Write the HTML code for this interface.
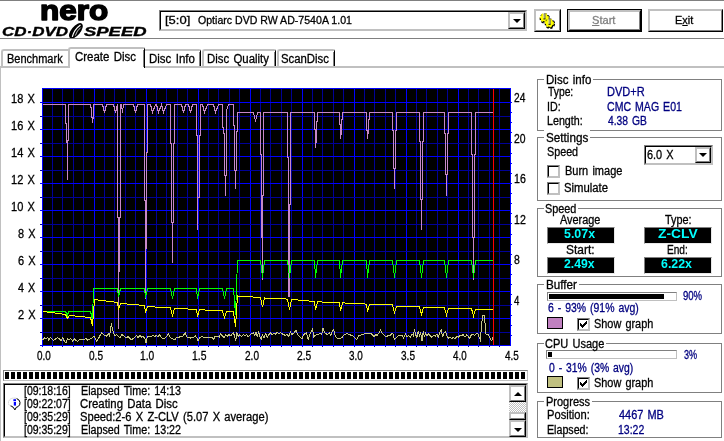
<!DOCTYPE html>
<html lang="en">
<head>
<meta charset="utf-8">
<title>Nero CD-DVD Speed</title>
<style>
html,body{margin:0;padding:0;background:#fff}
body{width:724px;height:441px;overflow:hidden;position:relative;font-family:"Liberation Sans",sans-serif;font-size:12px;color:#000}
#app{will-change:transform;position:absolute;left:0;top:0;width:724px;height:441px;overflow:hidden;background:#fff}
#app *{box-sizing:border-box}
.a,.t,.hl,.vl,.grp,.sunk,.btn,.chk,.bar,.sw,.lcd,svg{position:absolute}
.t{-webkit-text-stroke:0.3px currentColor;white-space:pre;transform-origin:0 0;line-height:14px;height:14px;font-size:12px}
.t.s11{font-size:11px;line-height:12px;height:12px}
.t.b{font-weight:bold;-webkit-text-stroke:0}
.t u{text-decoration:underline;text-underline-offset:1px}
.hl{height:1px}
.vl{width:1px}
.grp{border:1px solid #808080}
.sunk{border:1px solid;border-color:#808080 #c0c0c0 #c0c0c0 #808080;background:#fff}
.sunk>i{position:absolute;left:0;top:0;right:0;bottom:0;border:1px solid;border-color:#000 #c0c0c0 #c0c0c0 #000;display:block}
.btn{border:1px solid;border-color:#c0c0c0 #000 #000 #c0c0c0;background:#fff}
.btn>i{position:absolute;left:0;top:0;right:0;bottom:0;border:1px solid;border-color:#c0c0c0 #808080 #808080 #c0c0c0;display:block}
.arrow{position:absolute;width:0;height:0;border-left:4px solid transparent;border-right:4px solid transparent;border-top:4px solid #000}
.arrow.up{border-top:0;border-bottom:4px solid #000}
.bar{border:1px solid;border-color:#808080 #c0c0c0 #c0c0c0 #808080;background:#fff}
.bar>b{position:absolute;left:1px;top:1px;bottom:1px;background:#000;display:block}
.sw{border:1px solid #000}
.lcd{background:#000;border:1px solid;border-color:#808080 #e8e8e8 #e8e8e8 #808080}
.tab{position:absolute;background:#fff}
.cap{position:absolute;background:#fff;height:3px}
</style>
</head>
<body>
<div id="app">
<!-- top frame lines -->
<div class="hl" style="left:0;top:0;width:724px;background:#808080"></div>
<div class="hl" style="left:0;top:38px;width:724px;background:#808080"></div>

<!-- logo -->
<svg class="logo" style="left:0;top:0" width="156" height="38" viewBox="0 0 156 38">
<text x="40" y="19.7" font-family="'Liberation Sans',sans-serif" font-weight="bold" font-size="27.2" textLength="68.2" lengthAdjust="spacingAndGlyphs" fill="#000" stroke="#000" stroke-width="1.5" stroke-linejoin="round">nero</text>
<g font-family="'Liberation Sans',sans-serif" font-weight="bold" font-style="italic" font-size="12" fill="#000" stroke="#000" stroke-width="0.35">
<text x="2" y="35.6" textLength="66" lengthAdjust="spacingAndGlyphs">CD·DVD</text>
<text x="84" y="35.6" textLength="62.5" lengthAdjust="spacingAndGlyphs">SPEED</text>
</g>
<g transform="translate(75.9 30.8) rotate(-50)"><ellipse cx="0" cy="0" rx="9.3" ry="4.5" fill="#000"/><path d="M-7 1.2 Q0 -2.2 7.4 -0.2" stroke="#fff" stroke-width="1.2" fill="none"/><path d="M-4 2.6 Q1 0.6 5.5 1.6" stroke="#fff" stroke-width="0.7" fill="none"/></g>
</svg>

<!-- drive combobox -->
<div class="sunk" style="left:159px;top:10px;width:368px;height:21px"><i></i></div>
<div class="btn" style="left:508px;top:12px;width:17px;height:17px"><i></i><span class="arrow" style="left:4px;top:6px"></span></div>

<!-- options button -->
<div class="btn" style="left:534px;top:9px;width:27px;height:23px"><i></i>
<svg style="left:3px;top:1px" width="21" height="20" viewBox="0 0 21 20"><circle cx="6.8" cy="7.4" r="3.6" fill="#000" stroke="#000" stroke-width="3.2" stroke-dasharray="1.9 1.35"/><circle cx="6.8" cy="7.4" r="4.1" fill="#000"/><circle cx="6.3" cy="6.7" r="3.4" fill="#ffff00" stroke="#ffff00" stroke-width="2.2" stroke-dasharray="1.7 1.55"/><circle cx="6.3" cy="6.7" r="3.5" fill="#ffff00"/><rect x="5.3999999999999995" y="2.3" width="1.1" height="5.4" fill="#c0c0c8"/><rect x="6.5" y="2.3" width="1" height="5.4" fill="#606068"/><rect x="5.3999999999999995" y="7.5" width="2.1" height="0.9" fill="#000"/><circle cx="11.9" cy="12.799999999999999" r="3.6" fill="#000" stroke="#000" stroke-width="3.2" stroke-dasharray="1.9 1.35"/><circle cx="11.9" cy="12.799999999999999" r="4.1" fill="#000"/><circle cx="11.4" cy="12.1" r="3.4" fill="#ffff00" stroke="#ffff00" stroke-width="2.2" stroke-dasharray="1.7 1.55"/><circle cx="11.4" cy="12.1" r="3.5" fill="#ffff00"/><rect x="10.5" y="7.699999999999999" width="1.1" height="5.4" fill="#c0c0c8"/><rect x="11.6" y="7.699999999999999" width="1" height="5.4" fill="#606068"/><rect x="10.5" y="12.9" width="2.1" height="0.9" fill="#000"/></svg></div>

<!-- Start / Exit buttons -->
<div class="a" style="left:567px;top:9px;width:75px;height:23px;border:1px solid #000"></div>
<div class="btn" style="left:568px;top:10px;width:73px;height:21px"><i></i></div>
<div class="btn" style="left:648px;top:9px;width:75px;height:23px"><i></i></div>

<!-- tab control -->
<div class="a" style="left:0;top:66px;width:724px;height:2px;background:#c0c0c0"></div>
<div class="vl" style="left:0;top:66px;height:375px;background:#c0c0c0"></div>
<!-- unselected tabs -->
<div class="tab" style="left:1px;top:49px;width:68px;height:17px;border-top:2px solid #c0c0c0;border-left:2px solid #c0c0c0;border-radius:3px 0 0 0"></div>
<div class="tab" style="left:145px;top:49px;width:56px;height:17px;border-top:2px solid #c0c0c0;border-right:1px solid #000;border-radius:0 2px 0 0"><div class="vl" style="right:0;top:1px;bottom:0;background:#808080"></div></div>
<div class="tab" style="left:202px;top:49px;width:74px;height:17px;border-top:2px solid #c0c0c0;border-left:2px solid #c0c0c0;border-right:1px solid #000;border-radius:3px 2px 0 0"><div class="vl" style="right:0;top:1px;bottom:0;background:#808080"></div></div>
<div class="tab" style="left:277px;top:49px;width:58px;height:17px;border-top:2px solid #c0c0c0;border-left:2px solid #c0c0c0;border-right:1px solid #000;border-radius:3px 2px 0 0"><div class="vl" style="right:0;top:1px;bottom:0;background:#808080"></div></div>
<!-- selected tab -->
<div class="tab" style="left:68px;top:47px;width:77px;height:21px;border-top:2px solid #c0c0c0;border-left:2px solid #c0c0c0;border-right:1px solid #000;border-radius:3px 2px 0 0"><div class="vl" style="right:0;top:1px;bottom:1px;background:#808080"></div></div>

<svg class="chart" style="left:0;top:70px" width="532" height="294" viewBox="0 70 532 294"><rect x="42" y="88" width="469" height="258" fill="#000"/><g shape-rendering="crispEdges" fill="none"><path d="M52.5 89V347" stroke="#000098"/><path d="M62.5 89V347" stroke="#000098"/><path d="M73.5 89V347" stroke="#000098"/><path d="M83.5 89V347" stroke="#000098"/><path d="M94.5 89V347" stroke="#0000ff"/><path d="M104.5 89V347" stroke="#000098"/><path d="M114.5 89V347" stroke="#000098"/><path d="M125.5 89V347" stroke="#000098"/><path d="M135.5 89V347" stroke="#000098"/><path d="M146.5 89V347" stroke="#0000ff"/><path d="M156.5 89V347" stroke="#000098"/><path d="M166.5 89V347" stroke="#000098"/><path d="M177.5 89V347" stroke="#000098"/><path d="M187.5 89V347" stroke="#000098"/><path d="M198.5 89V347" stroke="#0000ff"/><path d="M208.5 89V347" stroke="#000098"/><path d="M218.5 89V347" stroke="#000098"/><path d="M229.5 89V347" stroke="#000098"/><path d="M239.5 89V347" stroke="#000098"/><path d="M250.5 89V347" stroke="#0000ff"/><path d="M260.5 89V347" stroke="#000098"/><path d="M270.5 89V347" stroke="#000098"/><path d="M281.5 89V347" stroke="#000098"/><path d="M291.5 89V347" stroke="#000098"/><path d="M302.5 89V347" stroke="#0000ff"/><path d="M312.5 89V347" stroke="#000098"/><path d="M322.5 89V347" stroke="#000098"/><path d="M333.5 89V347" stroke="#000098"/><path d="M343.5 89V347" stroke="#000098"/><path d="M354.5 89V347" stroke="#0000ff"/><path d="M364.5 89V347" stroke="#000098"/><path d="M374.5 89V347" stroke="#000098"/><path d="M385.5 89V347" stroke="#000098"/><path d="M395.5 89V347" stroke="#000098"/><path d="M406.5 89V347" stroke="#0000ff"/><path d="M416.5 89V347" stroke="#000098"/><path d="M426.5 89V347" stroke="#000098"/><path d="M437.5 89V347" stroke="#000098"/><path d="M447.5 89V347" stroke="#000098"/><path d="M458.5 89V347" stroke="#0000ff"/><path d="M468.5 89V347" stroke="#000098"/><path d="M478.5 89V347" stroke="#000098"/><path d="M489.5 89V347" stroke="#000098"/><path d="M499.5 89V347" stroke="#000098"/><path d="M40 332.5H510" stroke="#000098"/><path d="M40 318.5H510" stroke="#0000ff"/><path d="M40 305.5H510" stroke="#000098"/><path d="M40 291.5H510" stroke="#0000ff"/><path d="M40 278.5H510" stroke="#000098"/><path d="M40 264.5H510" stroke="#0000ff"/><path d="M40 251.5H510" stroke="#000098"/><path d="M40 237.5H510" stroke="#0000ff"/><path d="M40 224.5H510" stroke="#000098"/><path d="M40 210.5H510" stroke="#0000ff"/><path d="M40 197.5H510" stroke="#000098"/><path d="M40 183.5H510" stroke="#0000ff"/><path d="M40 170.5H510" stroke="#000098"/><path d="M40 156.5H510" stroke="#0000ff"/><path d="M40 143.5H510" stroke="#000098"/><path d="M40 129.5H510" stroke="#0000ff"/><path d="M40 116.5H510" stroke="#000098"/><path d="M40 102.5H510" stroke="#0000ff"/><path d="M42.5 88V347M510.5 88V346M42 88.5H511M40 345.5H511" stroke="#0000ff"/><path d="M511 335.5h1M511 325.5h1M511 315.5h1M511 304.5h1M511 294.5h1M511 284.5h1M511 274.5h1M511 264.5h1M511 254.5h1M511 244.5h1M511 234.5h1M511 223.5h1M511 213.5h1M511 203.5h1M511 193.5h1M511 183.5h1M511 173.5h1M511 163.5h1M511 153.5h1M511 142.5h1M511 132.5h1M511 122.5h1M511 112.5h1M511 102.5h1" stroke="#0000ff"/></g><g shape-rendering="crispEdges"><polyline points="43.5,104.5 65.5,104.5 65.5,123.5 66.5,123.5 66.5,142.5 67.5,142.5 67.5,179.5 67.5,140.5 68.5,140.5 68.5,104.5 90.5,104.5 91.5,110.5 91.5,117.5 92.5,117.5 92.5,122.5 93.5,116.5 93.5,104.5 102.5,104.5 104.5,112.5 106.5,104.5 113.5,104.5 115.5,112.5 117.5,104.5 117.5,217.5 118.5,217.5 118.5,328.5 118.5,271.5 119.5,271.5 119.5,217.5 120.5,217.5 120.5,104.5 121.5,104.5 122.5,112.5 123.5,104.5 133.5,104.5 135.5,112.5 137.5,104.5 144.5,104.5 144.5,200.5 145.5,200.5 145.5,298.5 145.5,248.5 146.5,248.5 146.5,152.5 147.5,152.5 147.5,104.5 150.5,104.5 152.5,112.5 155.5,104.5 156.5,104.5 158.5,112.5 161.5,104.5 163.5,112.5 166.5,104.5 170.5,104.5 170.5,143.5 171.5,143.5 171.5,222.5 172.5,222.5 172.5,262.5 172.5,222.5 173.5,222.5 173.5,143.5 174.5,143.5 174.5,104.5 181.5,104.5 183.5,112.5 185.5,104.5 188.5,104.5 190.5,112.5 192.5,104.5 196.5,104.5 196.5,135.5 197.5,135.5 197.5,229.5 197.5,197.5 199.5,197.5 199.5,135.5 200.5,135.5 200.5,104.5 202.5,104.5 204.5,112.5 207.5,104.5 213.5,104.5 215.5,112.5 218.5,104.5 222.5,104.5 222.5,127.5 223.5,127.5 223.5,133.5 224.5,133.5 224.5,175.5 225.5,175.5 225.5,195.5 225.5,175.5 226.5,175.5 226.5,110.5 228.5,104.5 233.5,104.5 233.5,125.5 234.5,125.5 234.5,170.5 235.5,170.5 235.5,188.5 235.5,170.5 236.5,170.5 236.5,131.5 237.5,131.5 237.5,112.5 253.5,112.5 255.5,121.5 257.5,112.5 260.5,112.5 260.5,154.5 261.5,154.5 261.5,237.5 262.5,237.5 262.5,279.5 262.5,195.5 263.5,195.5 263.5,112.5 287.5,112.5 287.5,157.5 288.5,157.5 288.5,296.5 289.5,296.5 289.5,204.5 290.5,204.5 290.5,112.5 314.5,112.5 314.5,129.5 315.5,129.5 315.5,147.5 316.5,138.5 316.5,121.5 317.5,121.5 317.5,112.5 339.5,112.5 339.5,124.5 340.5,124.5 340.5,138.5 341.5,132.5 341.5,119.5 342.5,119.5 342.5,112.5 366.5,112.5 366.5,130.5 367.5,130.5 367.5,138.5 368.5,130.5 368.5,119.5 369.5,119.5 369.5,112.5 392.5,112.5 392.5,130.5 393.5,130.5 393.5,168.5 394.5,168.5 394.5,188.5 394.5,168.5 395.5,168.5 395.5,130.5 396.5,130.5 396.5,112.5 419.5,112.5 419.5,141.5 420.5,141.5 420.5,199.5 421.5,199.5 421.5,229.5 421.5,199.5 422.5,199.5 422.5,141.5 423.5,141.5 423.5,112.5 444.5,112.5 444.5,133.5 445.5,133.5 445.5,174.5 446.5,174.5 446.5,195.5 446.5,174.5 447.5,174.5 447.5,133.5 448.5,133.5 448.5,112.5 471.5,112.5 471.5,154.5 472.5,154.5 472.5,237.5 473.5,237.5 473.5,279.5 473.5,237.5 474.5,237.5 474.5,154.5 475.5,154.5 475.5,112.5 492.5,112.5" fill="none" stroke="#c888c8" stroke-width="1" stroke-linejoin="miter" stroke-linecap="square"/><polyline points="43.5,311.5 65.5,311.5 67.5,315.5 68.5,311.5 90.5,311.5 92.5,319.5 93.5,288.5 117.5,288.5 118.5,296.5 120.5,288.5 144.5,288.5 145.5,297.5 147.5,288.5 170.5,288.5 172.5,298.5 174.5,288.5 196.5,288.5 197.5,298.5 199.5,288.5 222.5,288.5 224.5,298.5 226.5,288.5 233.5,288.5 235.5,314.5 237.5,260.5 260.5,260.5 262.5,277.5 264.5,260.5 287.5,260.5 289.5,277.5 291.5,260.5 314.5,260.5 315.5,277.5 317.5,260.5 339.5,260.5 340.5,277.5 342.5,260.5 366.5,260.5 367.5,277.5 369.5,260.5 392.5,260.5 394.5,277.5 396.5,260.5 419.5,260.5 421.5,277.5 423.5,260.5 444.5,260.5 446.5,277.5 448.5,260.5 471.5,260.5 473.5,277.5 475.5,260.5 492.5,260.5" fill="none" stroke="#00ff00" stroke-width="1" stroke-linejoin="miter" stroke-linecap="square"/><polyline points="43.5,311.5 65.5,314.5 67.5,318.5 69.5,315.5 90.5,317.5 92.5,325.5 94.5,299.5 117.5,302.5 118.5,309.5 120.5,303.5 144.5,305.5 145.5,312.5 147.5,306.5 170.5,308 172.5,315.5 174.5,308.2 196.5,309.5 197.5,316.5 199.5,309.7 222.5,311 224.5,317.5 226.5,311.5 233.5,312 235.5,326.5 237.5,296 260.5,297.5 262.5,307 264.5,298 287.5,299.1 289.5,309.5 291.5,299.5 303.5,300.5 314.5,301.5 315.5,309.5 317.5,301.8 339.5,302.9 340.5,310.9 342.5,302.9 366.5,304.1 367.5,312 369.5,304.1 392.5,305 394.5,312.5 396.5,306.3 419.5,307 421.5,314.2 423.5,307.5 444.5,307.8 446.5,315 448.5,308.1 471.5,308.5 473.5,316 475.5,309 492.5,309" fill="none" stroke="#ffff00" stroke-width="1" stroke-linejoin="miter" stroke-linecap="square"/></g><g shape-rendering="crispEdges"><polyline points="42.8,339.5 44.5,337.9 46.1,338.7 47.8,337.1 49,340.4 50.3,337.6 51.9,338.7 53.6,340.4 55.3,339.2 57.7,337.6 59.4,338.7 61.1,340.4 62.7,337.9 64.4,341.2 66,342.9 67.7,338.7 69.3,339.5 71,338.7 72.7,341.2 74.3,338.7 76,340.4 77.6,341.2 79.3,339.5 81.8,339.2 84.3,339.9 85.9,338.2 87.6,340.4 89.2,339.2 91.7,338.7 93.7,336.2 95,337.6 96.7,341.2 98.4,338.7 100,335.4 101.7,332.9 103.3,334.6 105,335.4 106.6,336.2 108.3,333.7 109.6,336.2 110.8,327.9 111.3,323 112.4,329.6 113.6,332.9 114.9,335.4 116.6,334.6 118.2,336.2 119.9,337.9 121.6,334.6 123.2,335.4 124.9,337.1 126.5,337.9 128.2,336.2 129.9,338.7 131.5,339.5 133.2,338.7 134.8,337.1 136.5,335.4 138.1,337.9 139.8,335.4 141.5,337.1 143.1,336.2 144.8,338.7 146.1,342.9 147.3,337.1 148.9,335.9 151.4,336.6 153.1,335.4 154.7,336.6 156.4,335.4 158,337.1 159.7,334.6 161.3,337.9 162,337.9 163.7,338.7 165.3,337.6 167,336.2 168.6,333.7 170.3,337.9 171.9,338.2 173.6,339.5 175.3,339.2 176.9,337.1 178.6,337.9 180.2,335.9 181.9,337.1 183.5,335.4 185.2,332.9 186.9,337.1 188.5,337.6 190.2,338.2 191.8,337.1 193.5,337.9 195.2,335.9 196.8,337.9 198.1,340.9 199.8,337.9 201.8,336.6 204.3,337.6 206.8,337.2 209.2,337.6 211.7,337.1 213.4,339.5 215,336.6 217.5,336.2 219.2,337.1 220.8,333.7 222.5,336.2 224.2,337.9 225.8,334.6 227.5,336.2 229.1,334.6 230.8,335.9 232.4,333.7 233.6,332.9 234.9,337.9 235.8,340.4 236.9,332.9 238.2,336.2 239.9,334.6 241.6,336.6 243.2,334.6 244.9,335.9 246.5,334.6 248.2,337.1 249.9,335.4 251.5,333.7 253.2,332.9 254.8,335.4 256.1,332.1 257.3,337.1 258.5,331.3 259.8,336.2 261.1,339.5 262.4,334.6 263.9,337.9 265.6,333.7 267.3,337.1 268.9,334.6 270.6,332.9 272.2,334.6 273.9,333.2 275.5,334.2 277.2,332.1 278.9,333.7 280.5,332.9 282,333.7 283.7,334.6 285.3,335.4 287,334.2 288.6,336.6 290.3,332.1 291.9,334.6 293.6,333.2 295.3,331.3 296.1,330.4 297.7,334.6 299.4,336.2 301.1,337.9 302.2,338.7 303.5,334.6 305.2,333.7 306.5,332.6 308.2,339.5 309.8,334.6 311.5,331.3 312.5,329.3 313.8,337.1 315.2,335.4 317.6,334.6 320.1,333.7 321.8,334.2 323.1,327.9 324.3,332.1 325.9,333.7 327.6,334.6 329.2,332.9 330.9,335.4 332.6,330.4 333.7,329.3 335,335.4 336.7,337.9 339.2,338.7 341.7,337.9 343.3,335.4 345,334.6 346.6,333.7 348.3,334.2 350,334.9 352.4,335.4 354.1,337.1 355.8,338.7 356.9,339.5 358.2,336.2 359.9,335.4 361.6,334.6 364,334.2 365.7,333.2 368.2,333.2 370.7,333.2 372.3,334.6 374,337.1 375.7,334.6 377.3,335.4 379,332.9 380.6,329.9 382,332.9 383.4,334.6 385.1,335.9 386.8,336.6 388.4,335.4 390.1,335.9 391.7,333.7 392.7,333.2 394.4,339.5 396,337.9 397.7,336.2 399.4,335.4 401,335.9 402,335.4 403.7,338.1 405.3,334 407,336.5 408.6,335.6 410.3,337.3 411.9,334 413.3,335.6 414.4,329.5 415.6,334.8 416.9,337.3 418.1,331.5 419.4,335.6 420.6,332.3 421.9,341.4 423.2,331.5 424.4,337.3 425.5,333.2 426.9,335.6 428.5,334 430.2,335.6 431.8,337.3 433.5,335.1 435.2,336.1 436.8,334 438.1,337.3 439.8,332.3 441.4,329.8 442.6,337.3 443.8,333.2 445.4,331.5 446.8,335.6 448.4,338.1 450.1,337.3 451.7,338.5 453.4,337.3 455,339 456.7,336.5 458.4,337.3 460,335.1 461.7,335.6 463.3,334.5 465,337.3 466.6,335.1 468.3,336.5 469.6,338.1 471.3,335.1 472.9,334.5 474.6,335.6 476.3,334 477.9,333.2 479.1,337.3 480.2,339.8 481.2,329.8 482.1,319.9 482.9,315.7 484.2,315.2 484.9,321.5 485.7,334 486.9,334.8 488.2,334.5 489.5,337.3 490.7,339.8 491.8,340.6 492.8,338.1" fill="none" stroke="#c8c888" stroke-width="1" stroke-linejoin="miter" stroke-linecap="square"/></g><path d="M493.5 89V345" stroke="#ff0000" shape-rendering="crispEdges"/></svg>

<!-- group boxes -->
<div class="grp" style="left:537px;top:79px;width:185px;height:52px"></div><div class="cap" style="left:544px;top:78px;width:49px"></div>
<div class="grp" style="left:537px;top:137px;width:185px;height:64px"></div><div class="cap" style="left:544px;top:130px;width:46px;height:9px"></div>
<div class="grp" style="left:537px;top:208px;width:185px;height:69px"></div><div class="cap" style="left:544px;top:207px;width:34px"></div>
<div class="grp" style="left:537px;top:284px;width:185px;height:50px"></div><div class="cap" style="left:544px;top:283px;width:35px"></div>
<div class="grp" style="left:537px;top:343px;width:185px;height:50px"></div><div class="cap" style="left:544px;top:342px;width:62px"></div>
<div class="grp" style="left:537px;top:401px;width:185px;height:37px"></div><div class="cap" style="left:544px;top:400px;width:48px"></div>

<!-- settings controls -->
<div class="sunk" style="left:644px;top:145px;width:69px;height:20px"><i></i></div>
<div class="btn" style="left:695px;top:147px;width:16px;height:16px"><i></i><span class="arrow" style="left:3px;top:5px"></span></div>
<div class="sunk chk" style="left:547px;top:165px;width:13px;height:13px"><i></i></div>
<div class="sunk chk" style="left:547px;top:182px;width:13px;height:13px"><i></i></div>

<!-- speed lcd boxes -->
<div class="lcd" style="left:547px;top:227px;width:68px;height:17px"></div>
<div class="lcd" style="left:644px;top:227px;width:68px;height:17px"></div>
<div class="lcd" style="left:547px;top:257px;width:68px;height:17px"></div>
<div class="lcd" style="left:644px;top:257px;width:68px;height:17px"></div>

<!-- buffer -->
<div class="bar" style="left:547px;top:292px;width:130px;height:9px"><b style="width:115px"></b></div>
<div class="sw" style="left:547px;top:317px;width:16px;height:12px;background:#c080c0"></div>
<div class="sunk chk" style="left:577px;top:318px;width:13px;height:13px"><i></i><svg style="left:2px;top:2px" width="7" height="7" viewBox="0 0 7 7" shape-rendering="crispEdges"><path d="M0 2v3M1 3v3M2 4v3M3 3v3M4 2v3M5 1v3M6 0v3" stroke="#000" transform="translate(.5 0)"/></svg></div>
<!-- cpu -->
<div class="bar" style="left:546px;top:350px;width:131px;height:9px"><b style="width:4px"></b></div>
<div class="sw" style="left:547px;top:376px;width:16px;height:12px;background:#c0c080"></div>
<div class="sunk chk" style="left:577px;top:377px;width:13px;height:13px"><i></i><svg style="left:2px;top:2px" width="7" height="7" viewBox="0 0 7 7" shape-rendering="crispEdges"><path d="M0 2v3M1 3v3M2 4v3M3 3v3M4 2v3M5 1v3M6 0v3" stroke="#000" transform="translate(.5 0)"/></svg></div>

<!-- write progress (segmented) -->
<div class="bar" style="left:3px;top:370px;width:525px;height:11px;background:repeating-linear-gradient(90deg,#000 0,#000 4px,#fff 4px,#fff 6px) 1px 1px/522px 7px no-repeat #fff"></div>

<!-- log list -->
<div class="sunk" style="left:3px;top:383px;width:525px;height:55px"><i></i></div>
<div class="a" style="left:509px;top:385px;width:17px;height:51px;background:repeating-conic-gradient(#c0c0c0 0 25%,#fff 0 50%) 0 0/2px 2px"></div>
<div class="btn" style="left:509px;top:385px;width:17px;height:17px"><i></i><span class="arrow up" style="left:4px;top:6px"></span></div>
<div class="btn" style="left:509px;top:412px;width:17px;height:8px"><i></i></div>
<div class="btn" style="left:509px;top:420px;width:17px;height:17px"><i></i><span class="arrow" style="left:4px;top:7px"></span></div>
<svg style="left:8px;top:397px" width="14" height="14" viewBox="0 0 14 14">
<path d="M6.5 1.2a5 4.6 0 1 0 -1.2 9.1l1.6 2.6 1.4-2.7a5 4.6 0 0 0 -1.8-9z" fill="#fff" stroke="#c0c0c0" stroke-width="1" stroke-dasharray="1 1"/>
<path d="M8.6 1.6a5 4.6 0 0 1 1.2 8.2l-1.5.5-1.4 2.6-1.6-2.6-2.6-1.6" fill="none" stroke="#000" stroke-width="1"/>
<rect x="5.4" y="2.2" width="2.6" height="2" fill="#0000ff"/><rect x="5.8" y="5" width="2.2" height="3.6" fill="#0000ff"/>
</svg>

<span class="t s11" style="left:165.12px;top:14px;transform:scaleX(1.18)">[5:0]</span>
<span class="t s11" style="left:198.36px;top:14px;transform:scaleX(0.962)">Optiarc DVD RW AD-7540A 1.01</span>
<span class="t s11" style="left:591.75px;top:14px;transform:scaleX(1.009);color:#808080"><u>S</u>tart</span>
<span class="t s11" style="left:674.86px;top:14px;transform:scaleX(0.992)">E<u>x</u>it</span>
<span class="t" style="left:7.31px;top:52px;transform:scaleX(0.917)">Benchmark</span>
<span class="t" style="left:75.12px;top:50px;transform:scaleX(0.955);word-spacing:1.2px">Create Disc</span>
<span class="t" style="left:148.68px;top:52px;transform:scaleX(0.958);word-spacing:1.2px">Disc Info</span>
<span class="t" style="left:207.09px;top:52px;transform:scaleX(0.949);word-spacing:1.2px">Disc Quality</span>
<span class="t" style="left:281.23px;top:52px;transform:scaleX(0.946)">ScanDisc</span>
<span class="t" style="left:545.88px;top:73px;transform:scaleX(0.96);word-spacing:1.2px">Disc info</span>
<span class="t" style="left:547.5px;top:85px;transform:scaleX(0.86)">Type:</span>
<span class="t" style="left:606.91px;top:85px;transform:scaleX(0.92);color:#000080">DVD+R</span>
<span class="t" style="left:547.11px;top:99.5px;transform:scaleX(0.889)">ID:</span>
<span class="t" style="left:607.16px;top:99.5px;transform:scaleX(0.88);word-spacing:1.2px;color:#000080">CMC MAG E01</span>
<span class="t" style="left:546.93px;top:114px;transform:scaleX(0.892)">Length:</span>
<span class="t" style="left:607.6px;top:114px;transform:scaleX(0.858);word-spacing:1.2px;color:#000080">4.38 GB</span>
<span class="t" style="left:545.51px;top:131px;transform:scaleX(0.974)">Settings</span>
<span class="t" style="left:546.55px;top:145px;transform:scaleX(0.896)">Speed</span>
<span class="t" style="left:646.95px;top:148px;transform:scaleX(0.909);word-spacing:1.2px">6.0 X</span>
<span class="t" style="left:565.11px;top:164px;transform:scaleX(0.917);word-spacing:1.2px">Burn image</span>
<span class="t" style="left:564.33px;top:181px;transform:scaleX(0.942)">Simulate</span>
<span class="t" style="left:545.25px;top:202px;transform:scaleX(0.904)">Speed</span>
<span class="t" style="left:560.0px;top:213px;transform:scaleX(0.908)">Average</span>
<span class="t" style="left:664.6px;top:213px;transform:scaleX(0.902)">Type:</span>
<span class="t b" style="left:563.98px;top:227px;transform:scaleX(1.034);color:#00ffff">5.07x</span>
<span class="t b" style="left:657.51px;top:227px;transform:scaleX(1.153);color:#00ffff">Z-CLV</span>
<span class="t" style="left:566.2px;top:243px;transform:scaleX(0.994)">Start:</span>
<span class="t" style="left:667.27px;top:243px;transform:scaleX(0.843)">End:</span>
<span class="t b" style="left:564.29px;top:257px;transform:scaleX(1.02);color:#00ffff">2.49x</span>
<span class="t b" style="left:661.08px;top:257px;transform:scaleX(1.031);color:#00ffff">6.22x</span>
<span class="t" style="left:546.17px;top:278px;transform:scaleX(0.971)">Buffer</span>
<span class="t" style="left:683.3px;top:289px;transform:scaleX(0.796);color:#000080">90%</span>
<span class="t" style="left:548.06px;top:301px;transform:scaleX(0.871);word-spacing:1.2px;color:#000080">6 - 93% (91% avg)</span>
<span class="t" style="left:594.45px;top:317px;transform:scaleX(0.909);word-spacing:1.2px">Show graph</span>
<span class="t" style="left:545.24px;top:337px;transform:scaleX(0.919);word-spacing:1.2px">CPU Usage</span>
<span class="t" style="left:683.71px;top:348px;transform:scaleX(0.758);color:#000080">3%</span>
<span class="t" style="left:548.58px;top:360.5px;transform:scaleX(0.864);word-spacing:1.2px;color:#000080">0 - 31% (3% avg)</span>
<span class="t" style="left:594.45px;top:376px;transform:scaleX(0.909);word-spacing:1.2px">Show graph</span>
<span class="t" style="left:546.21px;top:395px;transform:scaleX(0.917)">Progress</span>
<span class="t" style="left:547.3px;top:408px;transform:scaleX(0.929)">Position:</span>
<span class="t" style="left:619.0px;top:408px;transform:scaleX(0.911);word-spacing:1.2px;color:#000080">4467 MB</span>
<span class="t" style="left:547.33px;top:423px;transform:scaleX(0.889)">Elapsed:</span>
<span class="t" style="left:618.34px;top:423px;transform:scaleX(0.876);color:#000080">13:22</span>
<span class="t" style="left:23.84px;top:384px;transform:scaleX(0.875)">[09:18:16]</span>
<span class="t" style="left:80.93px;top:384px;transform:scaleX(0.895);word-spacing:1.2px">Elapsed Time: 14:13</span>
<span class="t" style="left:23.84px;top:397px;transform:scaleX(0.875)">[09:22:07]</span>
<span class="t" style="left:80.33px;top:397px;transform:scaleX(0.948);word-spacing:1.2px">Creating Data Disc</span>
<span class="t" style="left:23.84px;top:410px;transform:scaleX(0.875)">[09:35:29]</span>
<span class="t" style="left:80.33px;top:410px;transform:scaleX(0.93);word-spacing:1.2px">Speed:2-6 X Z-CLV (5.07 X average)</span>
<span class="t" style="left:23.84px;top:423px;transform:scaleX(0.875)">[09:35:29]</span>
<span class="t" style="left:80.93px;top:423px;transform:scaleX(0.895);word-spacing:1.2px">Elapsed Time: 13:22</span>
<span class="t" style="left:17.54px;top:308px;transform:scaleX(0.919);word-spacing:1.2px">2 X</span>
<span class="t" style="left:18.0px;top:281px;transform:scaleX(0.895);word-spacing:1.2px">4 X</span>
<span class="t" style="left:17.54px;top:254px;transform:scaleX(0.919);word-spacing:1.2px">6 X</span>
<span class="t" style="left:17.77px;top:227px;transform:scaleX(0.907);word-spacing:1.2px">8 X</span>
<span class="t" style="left:11.31px;top:200px;transform:scaleX(0.92);word-spacing:1.2px">10 X</span>
<span class="t" style="left:11.31px;top:173px;transform:scaleX(0.92);word-spacing:1.2px">12 X</span>
<span class="t" style="left:11.31px;top:146px;transform:scaleX(0.92);word-spacing:1.2px">14 X</span>
<span class="t" style="left:11.31px;top:119px;transform:scaleX(0.92);word-spacing:1.2px">16 X</span>
<span class="t" style="left:11.31px;top:92px;transform:scaleX(0.92);word-spacing:1.2px">18 X</span>
<span class="t" style="left:514.2px;top:294px;transform:scaleX(0.8)">4</span>
<span class="t" style="left:513.98px;top:253px;transform:scaleX(0.867)">8</span>
<span class="t" style="left:513.54px;top:213px;transform:scaleX(0.882)">12</span>
<span class="t" style="left:513.54px;top:172px;transform:scaleX(0.882)">16</span>
<span class="t" style="left:513.77px;top:132px;transform:scaleX(0.864)">20</span>
<span class="t" style="left:513.78px;top:91px;transform:scaleX(0.847)">24</span>
<span class="t" style="left:36.79px;top:349px;transform:scaleX(0.825)">0.0</span>
<span class="t" style="left:88.79px;top:349px;transform:scaleX(0.838)">0.5</span>
<span class="t" style="left:140.36px;top:349px;transform:scaleX(0.851)">1.0</span>
<span class="t" style="left:192.35px;top:349px;transform:scaleX(0.865)">1.5</span>
<span class="t" style="left:244.58px;top:349px;transform:scaleX(0.837)">2.0</span>
<span class="t" style="left:296.57px;top:349px;transform:scaleX(0.851)">2.5</span>
<span class="t" style="left:348.79px;top:349px;transform:scaleX(0.825)">3.0</span>
<span class="t" style="left:400.79px;top:349px;transform:scaleX(0.837)">3.5</span>
<span class="t" style="left:453.0px;top:349px;transform:scaleX(0.812)">4.0</span>
<span class="t" style="left:505.0px;top:349px;transform:scaleX(0.825)">4.5</span>
</div>
</body>
</html>
